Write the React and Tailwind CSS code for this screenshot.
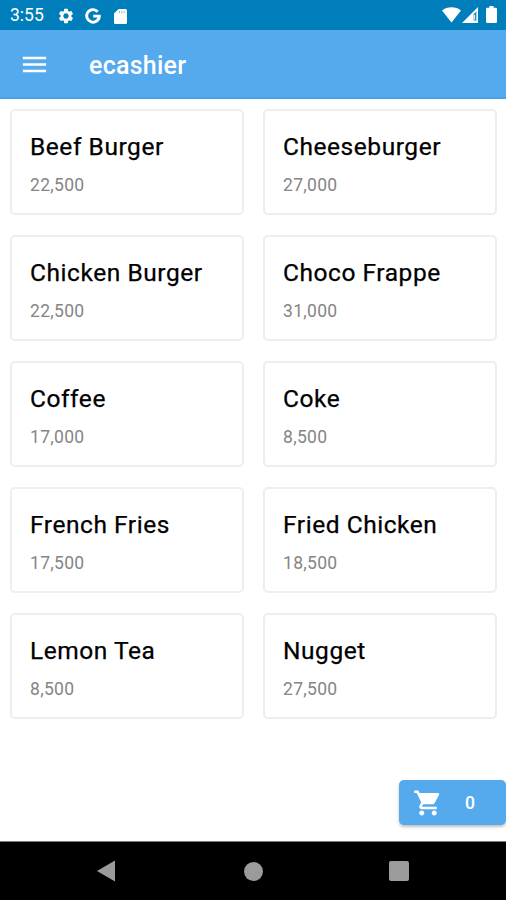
import React, { useState } from 'react';
import { MdMenu, MdSettings, MdShoppingCart } from 'react-icons/md';

const products = [
    { name: 'Beef Burger', price: 22500 },
    { name: 'Cheeseburger', price: 27000 },
    { name: 'Chicken Burger', price: 22500 },
    { name: 'Choco Frappe', price: 31000 },
    { name: 'Coffee', price: 17000 },
    { name: 'Coke', price: 8500 },
    { name: 'French Fries', price: 17500 },
    { name: 'Fried Chicken', price: 18500 },
    { name: 'Lemon Tea', price: 8500 },
    { name: 'Nugget', price: 27500 },
];

const StatusBar = () => (
    <div className="flex h-[30px] items-center justify-between bg-[#007dbb] pl-[10px] pr-[8px] text-white">
        <div className="flex items-center pt-[2px]">
            <span className="w-[47px] text-[17.5px] leading-none">3:55</span>
            <MdSettings className="h-[18px] w-[18px]" />
            <svg viewBox="0 0 16 16" className="ml-[10px] h-[16px] w-[16px]" fill="none" stroke="currentColor" strokeWidth="2.9">
                <path d="M12.7 3.7A6.3 6.3 0 1 0 14.3 8.1H8.2" />
            </svg>
            <svg viewBox="0 0 13 15" className="ml-[13px] h-[15px] w-[13px]">
                <path fill="currentColor" d="M4.6 0H11.5Q13 0 13 1.5V13.5Q13 15 11.5 15H1.5Q0 15 0 13.5V4.6Z" />
                <path stroke="#007dbb" strokeOpacity=".45" strokeWidth="1" d="M5.5 2V4.4M7.8 2V4.4M10.1 2V4.4" />
            </svg>
        </div>
        <div className="flex items-center pb-[1px]">
            <svg viewBox="0 0 19 16" className="h-[16px] w-[19px]" fill="currentColor">
                <path d="M0 3.6Q4 .3 9.5 .3T19 3.6L9.5 15.6Z" />
            </svg>
            <svg viewBox="0 0 16 16" className="ml-[1px] h-[16px] w-[16px]">
                <path fill="currentColor" d="M16 0V16H0Z" />
                <path fill="#007dbb" fillOpacity=".85" d="M11.6 7L14.4 4.6V13.4H11.6Z" />
                <path fill="currentColor" d="M12 8H12.9V12.5H12Z" />
            </svg>
            <svg viewBox="0 0 11 17" className="ml-[8px] mr-[1px] h-[17px] w-[11px]" fill="currentColor">
                <path d="M3.4 0H7.6V1.8H9.8Q11 1.8 11 3V15.8Q11 17 9.8 17H1.2Q0 17 0 15.8V3Q0 1.8 1.2 1.8H3.4Z" />
            </svg>
        </div>
    </div>
);

const ProductCard = ({ product }) => (
    <button
        type="button"
        className="flex h-[106px] flex-col rounded-[5px] border-2 border-[#eeeeee] bg-white pl-[18px] pt-[21px] text-left"
    >
        <span className="text-[24.5px] font-normal leading-[30px] tracking-[0.55px] text-black [-webkit-text-stroke:0.25px_#000]">
            {product.name}
        </span>
        <span className="mt-[12px] text-[17.5px] leading-[22px] tracking-[0.3px] text-[#858585]">
            {product.price.toLocaleString('en-US')}
        </span>
    </button>
);

const NavigationBar = () => (
    <nav className="flex h-[59px] items-center justify-between border-t border-[#777] bg-black pl-[97px] pr-[97px] text-[#9b9b9b]">
        <svg viewBox="0 0 18 22" className="h-[22px] w-[18px]" fill="currentColor">
            <path d="M18 .5V21.5L0 11Z" />
        </svg>
        <div className="ml-[2px] h-[19px] w-[19px] rounded-full bg-[#9b9b9b]" />
        <div className="h-[20px] w-[20px] rounded-[2px] bg-[#9b9b9b]" />
    </nav>
);

const App = () => {
    const [cartCount] = useState(0);

    return (
        <div className="flex h-[900px] w-[506px] flex-col overflow-hidden bg-white font-['Roboto','Liberation_Sans',sans-serif]">
            <StatusBar />
            <header className="flex h-[69px] items-center border-b-2 border-[#45a4e8] bg-[#55aaee] pl-[19px] text-white">
                <button type="button" aria-label="Menu" className="pt-px">
                    <MdMenu className="h-[31px] w-[31px]" />
                </button>
                <h1 className="ml-[39px] mt-[4px] text-[25px] font-medium leading-none tracking-[0.25px]">ecashier</h1>
            </header>
            <main className="flex flex-1 flex-col justify-between pb-[16px] pt-[10px]">
                <div className="grid grid-cols-2 gap-x-[19px] gap-y-[20px] pl-[10px] pr-[9px]">
                    {products.map((product) => (
                        <ProductCard key={product.name} product={product} />
                    ))}
                </div>
                <button
                    type="button"
                    className="flex h-[45px] w-[107px] items-center self-end rounded-[5px] bg-[#55aaee] pl-[14px] text-white shadow-[0_2px_3px_rgba(0,0,0,0.25)]"
                >
                    <MdShoppingCart className="h-[30px] w-[30px]" />
                    <span className="ml-[22px] mt-[2px] text-[17.5px] font-medium">{cartCount}</span>
                </button>
            </main>
            <NavigationBar />
        </div>
    );
};

export default App;
